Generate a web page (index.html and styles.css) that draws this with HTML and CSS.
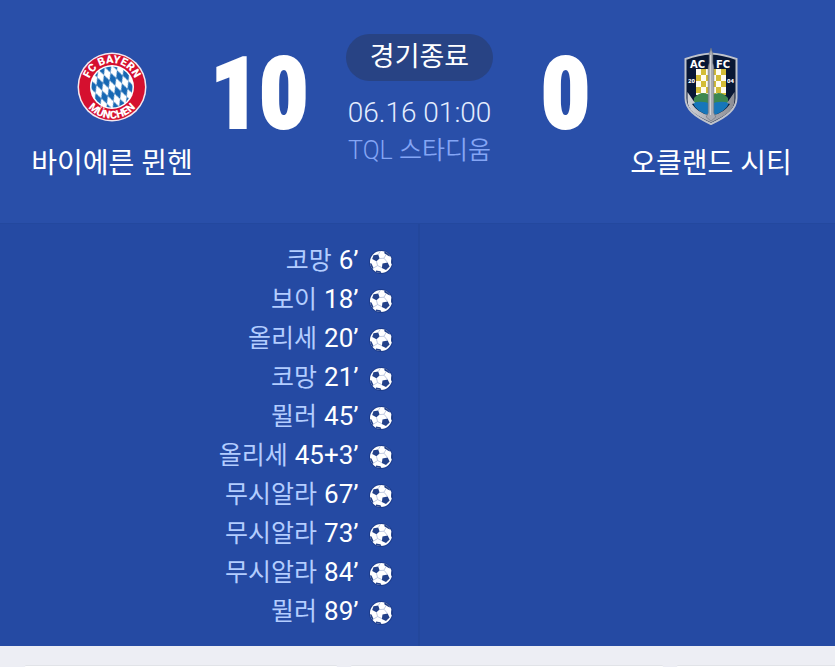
FILE: index.html
```html
<!DOCTYPE html>
<html lang="ko">
<head>
<meta charset="utf-8">
<meta name="viewport" content="width=device-width, initial-scale=1">
<title>바이에른 뮌헨 10 : 0 오클랜드 시티</title>
<link rel="stylesheet" href="styles.css">
</head>
<body>
<svg class="defs" aria-hidden="true">
  <defs>
    <clipPath id="ball-clip"><circle cx="12" cy="12" r="11"/></clipPath>
    <symbol id="ball" viewBox="0 0 24 24">
      <circle cx="12" cy="12" r="12" fill="#1c3c8c"/>
      <circle cx="12" cy="12" r="11" fill="#fff"/>
      <g clip-path="url(#ball-clip)" fill="#234189">
        <path d="M4.500 5.200 9.200 4.600 10.600 8.600 7.400 11.200 3.200 9z"/>
        <path d="M13.500 13.500 18.600 12.600 20.600 16.400 17 20 12.800 18z"/>
        <path d="M15 0 22 4 20.500 6.500 15.500 3.600z"/>
        <path d="M22 8.500 24 8v7l-2-1.500z"/>
        <path d="M0 13 2.500 13.500 4.500 18 3 20z"/>
        <path d="M7 20.500 11.500 21.200 13 24H7z"/>
        <path d="M10.600 8.600 15 8.200 17 4.600M15 8.200 18.600 12.600M7.400 11.200 8.600 15.600 13 17.600M8.600 15.600 4.500 18M9.200 4.600 11.500 1" fill="none" stroke="#a9b6d6" stroke-width=".7"/>
      </g>
    </symbol>
  </defs>
</svg>
<main class="match">
  <header class="board">
    <section class="team">
      <svg class="crest" viewBox="0 0 70 78" role="img" aria-label="FC Bayern München">
        <defs>
          <pattern id="lozenge" width="7" height="14" patternUnits="userSpaceOnUse" patternTransform="translate(35 39) rotate(-20)">
            <rect width="7" height="14" fill="#fff"/>
            <path d="M3.500 0 7 7 3.500 14 0 7z" fill="#1768b3"/>
          </pattern>
          <path id="arc-top" d="M11 39a24 24 0 0 1 48 0"/>
          <path id="arc-bottom" d="M3.500 39a31.500 31.500 0 0 0 63 0"/>
        </defs>
        <circle cx="35" cy="39" r="34.500" fill="#f3e8f0"/>
        <circle cx="35" cy="39" r="33" fill="#d5102f"/>
        <circle cx="35" cy="39" r="22" fill="#fff"/>
        <circle cx="35" cy="39" r="20.500" fill="url(#lozenge)"/>
        <g class="crest-text" font-size="11" text-anchor="middle">
          <text><textPath href="#arc-top" startOffset="50%">FC BAYERN</textPath></text>
          <text><textPath href="#arc-bottom" startOffset="50%">MÜNCHEN</textPath></text>
        </g>
      </svg>
      <h2 class="team-name">바이에른 뮌헨</h2>
    </section>
    <strong class="score">10</strong>
    <section class="info">
      <span class="status">경기종료</span>
      <time class="date" datetime="06-16T01:00">06.16 01:00</time>
      <span class="venue">TQL 스타디움</span>
    </section>
    <strong class="score">0</strong>
    <section class="team">
      <svg class="crest" viewBox="0 0 70 78" role="img" aria-label="Auckland City FC">
        <defs>
          <linearGradient id="steel"><stop offset="0" stop-color="#d2d3d8"/><stop offset=".5" stop-color="#a9abb2"/><stop offset="1" stop-color="#8b8d94"/></linearGradient>
          <pattern id="check" x="20" y="21" width="10" height="12" patternUnits="userSpaceOnUse">
            <rect width="10" height="12" fill="#fffdf0"/>
            <path d="M5 0h5v6H5zM0 6h5v6H0z" fill="#d3bd36"/>
          </pattern>
        </defs>
        <path d="M35 5.500C27 6 18 8 9.500 11v39c0 11 9 18.500 25.500 26C51.500 68.500 60.500 61 60.500 50V11C52 8 43 6 35 5.500z" fill="#081735" stroke="#bfc3cc" stroke-width="2"/>
        <path d="M20 21h30v26H20z" fill="url(#check)"/>
        <path d="M18 50q8-9 17-2 9-7 17 2v6H18z" fill="#3c8750"/>
        <path d="M17 55q9-3 18 1 9-4 18-1-3 9-18 13-15-4-18-13z" fill="#1676ba"/>
        <path d="M11.500 44 19 55l-3 1q6 9 16.500 11h5Q48 65 54 56l-3-1 7.500-11v8c0 10-8 15-23.500 22.500C19.500 67 11.500 62 11.500 52z" fill="url(#steel)"/>
        <path d="M35 0 36.800 6v9l1 4v46l2 4-4.800 4-4.800-4 2-4V19l1-4V6z" fill="#a9abb2" stroke="#686e7b" stroke-width=".6"/>
        <path d="M34.500 7v60" stroke="#dedfe3" stroke-width=".8"/>
        <g class="crest-text wide" font-size="10">
          <text x="14" y="20">AC</text><text x="40" y="20">FC</text>
        </g>
        <g class="crest-text" font-size="6">
          <text x="12" y="35">20</text><text x="51" y="35">04</text>
        </g>
      </svg>
      <h2 class="team-name">오클랜드 시티</h2>
    </section>
  </header>
  <div class="events">
    <ul class="goals">
      <li><span class="player">코망</span><span class="minute">6’</span><svg class="ball"><use href="#ball"/></svg></li>
      <li><span class="player">보이</span><span class="minute">18’</span><svg class="ball"><use href="#ball"/></svg></li>
      <li><span class="player">올리세</span><span class="minute">20’</span><svg class="ball"><use href="#ball"/></svg></li>
      <li><span class="player">코망</span><span class="minute">21’</span><svg class="ball"><use href="#ball"/></svg></li>
      <li><span class="player">뮐러</span><span class="minute">45’</span><svg class="ball"><use href="#ball"/></svg></li>
      <li><span class="player">올리세</span><span class="minute">45+3’</span><svg class="ball"><use href="#ball"/></svg></li>
      <li><span class="player">무시알라</span><span class="minute">67’</span><svg class="ball"><use href="#ball"/></svg></li>
      <li><span class="player">무시알라</span><span class="minute">73’</span><svg class="ball"><use href="#ball"/></svg></li>
      <li><span class="player">무시알라</span><span class="minute">84’</span><svg class="ball"><use href="#ball"/></svg></li>
      <li><span class="player">뮐러</span><span class="minute">89’</span><svg class="ball"><use href="#ball"/></svg></li>
    </ul>
    <div class="goals away"></div>
  </div>
</main>
<div class="cards"><div class="card"></div><div class="card"></div><div class="card"></div></div>
</body>
</html>
```
FILE: styles.css
```css
* { box-sizing: border-box; }
body {
  margin: 0;
  min-height: 100vh;
  display: flex;
  flex-direction: column;
  background: #edeef4;
  color: #fff;
  font-family: Roboto, "Noto Sans CJK KR", sans-serif;
}
.defs { position: absolute; width: 0; height: 0; }
.match { background: #254aa3; }
.board {
  display: grid;
  grid-template-columns: minmax(0, 224fr) minmax(0, 71fr) minmax(0, 249fr) minmax(0, 43fr) minmax(0, 248fr);
  align-items: start;
  padding: 34px 0 41px;
  background: #294fa9;
  border-bottom: 1px solid #23489e;
}
.team { display: flex; flex-direction: column; align-items: center; gap: 20px; padding-top: 14px; }
.crest { width: 70px; height: 78px; }
.crest-text { font-family: Roboto, sans-serif; font-weight: 900; fill: #fff; }
.wide { font-family: "DejaVu Sans", sans-serif; font-weight: 700; }
.team-name { margin: 0; font-size: 28px; line-height: 36px; font-weight: 400; white-space: nowrap; }
.score {
  display: flex;
  justify-content: center;
  font-family: "Roboto Condensed", "Liberation Sans Narrow", sans-serif;
  font-size: 96px;
  line-height: 120px;
  font-weight: 700;
  -webkit-text-stroke: 4px #fff;
}
.info { display: flex; flex-direction: column; align-items: center; white-space: nowrap; }
.status {
  padding: 0 24px;
  border-radius: 24px;
  background: #284384;
  font-size: 27px;
  line-height: 47px;
}
.date { margin-top: 14px; font-size: 28px; line-height: 36px; font-weight: 300; color: #e4edff; }
.venue { font-size: 25px; line-height: 40px; font-weight: 350; color: #84a5f5; }
.events { display: grid; grid-template-columns: 1fr 1fr; }
.goals { margin: 0; padding: 17px 25px 15px 0; list-style: none; }
.goals li { display: flex; justify-content: flex-end; align-items: baseline; height: 39px; line-height: 39px; white-space: nowrap; }
.player { font-size: 25px; color: #b3cdff; }
.minute { margin-left: 7px; font-size: 26px; }
.ball { align-self: center; width: 24px; height: 24px; margin: 2px 0 0 10px; }
.away { border-left: 2px solid #23479c; }
.cards { flex: 1; display: grid; grid-template-columns: repeat(3, 312px); gap: 14px; padding: 19px 0 0 25px; overflow: hidden; }
.card { border-top: 1px solid #e1e3e8; border-radius: 8px; background: #fff; }
```
